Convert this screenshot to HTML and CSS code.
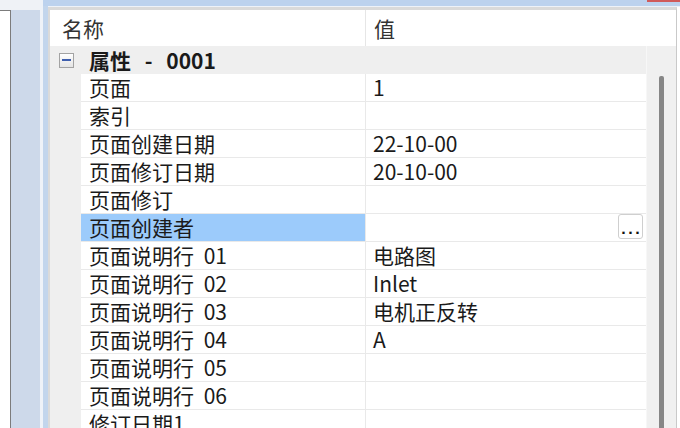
FILE: index.html
```html
<!DOCTYPE html>
<html lang="zh-CN">
<head>
  <meta charset="UTF-8">
  <title>属性</title>
  <link rel="stylesheet" href="styles.css">
</head>
<body>
  <div class="side"><div class="tree"></div></div>
  <div class="split"></div>
  <div class="main">
    <div class="titlebar"><span class="close"></span></div>
    <div class="panel">
      <div class="frame">
        <div class="grid-head">
          <div class="head-name">名称</div>
          <div class="head-val">值</div>
        </div>
        <div class="grid-body">
          <div class="rows">
            <div class="group">
              <span class="expander"><span class="minus"></span></span>
              <span class="group-title">属性 - 0001</span>
            </div>
            <div class="row"><div class="indent"></div><div class="name">页面</div><div class="val">1</div></div>
            <div class="row"><div class="indent"></div><div class="name">索引</div><div class="val"></div></div>
            <div class="row"><div class="indent"></div><div class="name">页面创建日期</div><div class="val">22-10-00</div></div>
            <div class="row"><div class="indent"></div><div class="name">页面修订日期</div><div class="val">20-10-00</div></div>
            <div class="row"><div class="indent"></div><div class="name">页面修订</div><div class="val"></div></div>
            <div class="row selected"><div class="indent"></div><div class="name">页面创建者</div><div class="val"><button class="more">...</button></div></div>
            <div class="row"><div class="indent"></div><div class="name">页面说明行 01</div><div class="val">电路图</div></div>
            <div class="row"><div class="indent"></div><div class="name">页面说明行 02</div><div class="val">Inlet</div></div>
            <div class="row"><div class="indent"></div><div class="name">页面说明行 03</div><div class="val">电机正反转</div></div>
            <div class="row"><div class="indent"></div><div class="name">页面说明行 04</div><div class="val">A</div></div>
            <div class="row"><div class="indent"></div><div class="name">页面说明行 05</div><div class="val"></div></div>
            <div class="row"><div class="indent"></div><div class="name">页面说明行 06</div><div class="val"></div></div>
            <div class="row"><div class="indent"></div><div class="name">修订日期1</div><div class="val"></div></div>
          </div>
          <div class="vscroll"><div class="thumb"></div></div>
        </div>
      </div>
    </div>
  </div>
</body>
</html>
```

FILE: styles.css
```css
/* Page */
body {
  margin: 0;
  width: 680px;
  height: 428px;
  overflow: hidden;
  display: flex;
  background: #cdd9ea;
  font-family: "Noto Sans CJK SC", sans-serif;
  font-size: 21px;
  color: #1a1a1a;
}
/* Left tree pane */
.side {
  width: 40px;
  border-top: 10px solid #eff2f6;
  background: #cdd9ea;
}
.tree {
  width: 10px;
  height: 100%;
  background: #fff;
  border-top: 1px solid #7c7c7c;
  border-right: 1px solid #7c7c7c;
}
.split {
  width: 3px;
  background: #eef2f8;
}
/* Right pane */
.main {
  flex: 1;
  min-height: 0;
  display: flex;
  flex-direction: column;
  background: #c2d5ec;
}
.titlebar {
  flex-shrink: 0;
  height: 6px;
  display: flex;
  justify-content: flex-end;
  background: #bcd2ee;
}
.close {
  width: 33px;
  height: 2px;
  background: #d05a5a;
}
.panel {
  flex: 1;
  min-height: 0;
  margin-left: 5px;
  padding-right: 3px;
  background: #fff;
  border-top: 1px solid #eef2f8;
  display: flex;
}
.frame {
  flex: 1;
  min-height: 0;
  display: flex;
  flex-direction: column;
  border-top: 3px solid #dadada;
  border-left: 2px solid #dadada;
  border-right: 1px solid #c9c9c9;
  background: #fff;
}
/* Header */
.grid-head {
  flex-shrink: 0;
  height: 36px;
  display: flex;
  align-items: stretch;
  color: #333;
}
.head-name {
  box-sizing: border-box;
  width: 316px;
  padding-left: 12px;
  border-right: 1px solid #e6e6e6;
  line-height: 36px;
}
.head-val {
  padding-left: 8px;
  line-height: 36px;
}
/* Body */
.grid-body {
  flex: 1;
  min-height: 0;
  display: flex;
  overflow: hidden;
}
.rows {
  flex: 1;
  word-spacing: 5px;
}
.group {
  height: 28px;
  display: flex;
  align-items: center;
  padding-left: 9px;
  background: #efefef;
}
.expander {
  box-sizing: border-box;
  width: 15px;
  height: 15px;
  margin-right: 15px;
  border: 1px solid #a3a3a3;
  background: linear-gradient(#ffffff, #e4e4e4);
  display: flex;
  align-items: center;
  justify-content: center;
}
.minus {
  width: 9px;
  height: 2px;
  background: #3f5fae;
}
.group-title {
  font-weight: 700;
  word-spacing: 9px;
  line-height: 28px;
}
.row {
  height: 28px;
  display: flex;
}
.indent {
  width: 31px;
  background: #efefef;
}
.name {
  box-sizing: border-box;
  width: 284px;
  padding-left: 8px;
  line-height: 27px;
  border-bottom: 1px solid #e9e9e9;
}
.val {
  flex: 1;
  display: flex;
  padding-left: 7px;
  line-height: 27px;
  border-left: 1px solid #e9e9e9;
  border-bottom: 1px solid #e9e9e9;
}
.selected .name {
  background: #9ccbfb;
}
.more {
  margin-left: auto;
  margin-right: 3px;
  width: 25px;
  height: 25px;
  padding: 0 0 2px 2px;
  border: 1px solid #cfcfcf;
  border-radius: 3px;
  background: #fff;
  font-family: "DejaVu Sans", sans-serif;
  font-size: 13px;
  font-weight: 700;
  line-height: 13px;
  letter-spacing: 2px;
  color: #111;
  display: flex;
  align-items: flex-end;
  justify-content: center;
}
/* Scrollbar */
.vscroll {
  width: 29px;
  background: #f0f0f0;
  border-left: 1px solid #f7f7f7;
}
.thumb {
  width: 5px;
  height: 400px;
  margin: 30px 0 0 12px;
  border-radius: 2px;
  background: #868686;
}
```
